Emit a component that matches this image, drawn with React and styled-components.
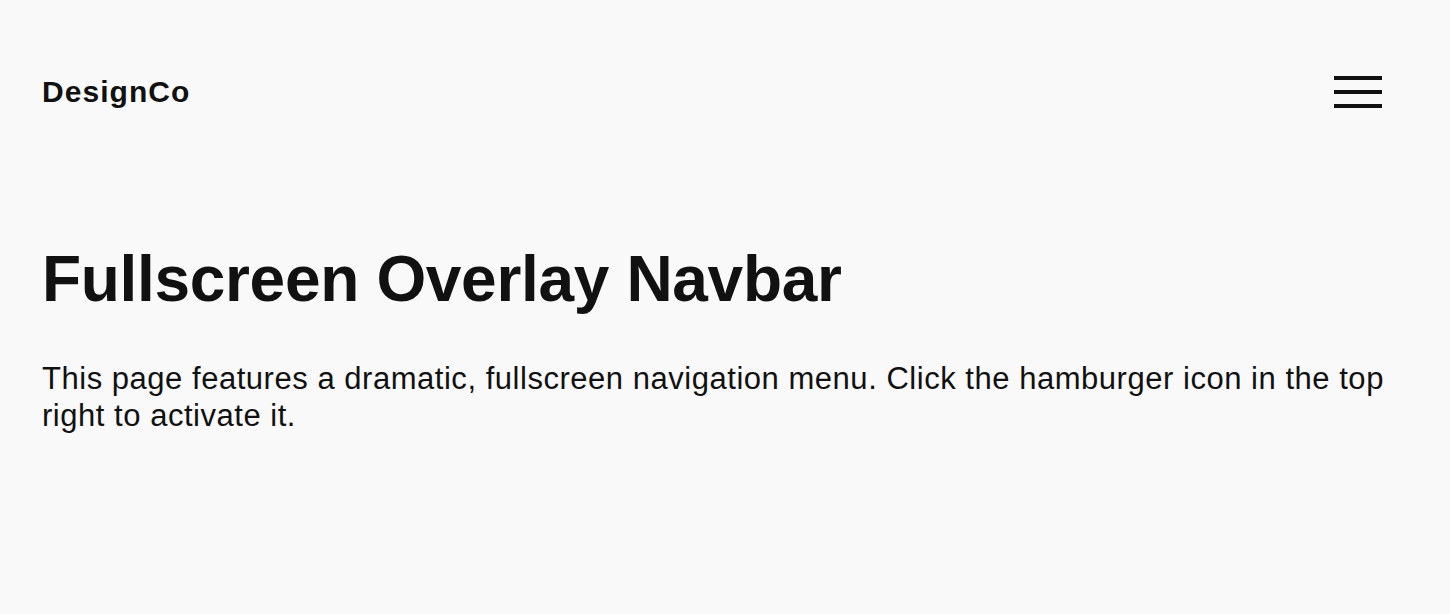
import React from "react";
import styled, { createGlobalStyle } from "styled-components";

const GlobalStyle = createGlobalStyle`
  html, body {
    margin: 0;
    padding: 0;
    background: #f9f9f9;
  }
  body {
    font-family: "Liberation Sans", Arial, Helvetica, sans-serif;
    color: #111;
  }
  * {
    box-sizing: border-box;
  }
`;

const Page = styled.div`
  min-height: 614px;
  background: #f9f9f9;
`;

const Header = styled.header`
  display: flex;
  justify-content: space-between;
  align-items: center;
  padding: 75px 68px 0 42px;
`;

const Logo = styled.a`
  font-size: 30px;
  font-weight: 700;
  color: #111;
  text-decoration: none;
  letter-spacing: 0.035em;
`;

const MenuButton = styled.button`
  display: flex;
  flex-direction: column;
  justify-content: space-between;
  width: 48px;
  height: 32px;
  padding: 0;
  border: none;
  background: transparent;
  cursor: pointer;
`;

const Bar = styled.span`
  display: block;
  width: 100%;
  height: 4px;
  background: #111;
`;

const Main = styled.main`
  padding: 132px 40px 0 42px;
`;

const Title = styled.h1`
  margin: 0;
  font-size: 64px;
  line-height: 1.2;
  font-weight: 700;
  letter-spacing: -0.005em;
`;

const Lead = styled.p`
  margin: 42px 0 0 0;
  font-size: 31px;
  line-height: 1.21;
  letter-spacing: 0.017em;
`;

export default function App() {
  return (
    <Page>
      <GlobalStyle />
      <Header>
        <Logo href="#">DesignCo</Logo>
        <MenuButton aria-label="Open menu">
          <Bar />
          <Bar />
          <Bar />
        </MenuButton>
      </Header>
      <Main>
        <Title>Fullscreen Overlay Navbar</Title>
        <Lead>
          This page features a dramatic, fullscreen navigation menu. Click the
          hamburger icon in the top right to activate it.
        </Lead>
      </Main>
    </Page>
  );
}
